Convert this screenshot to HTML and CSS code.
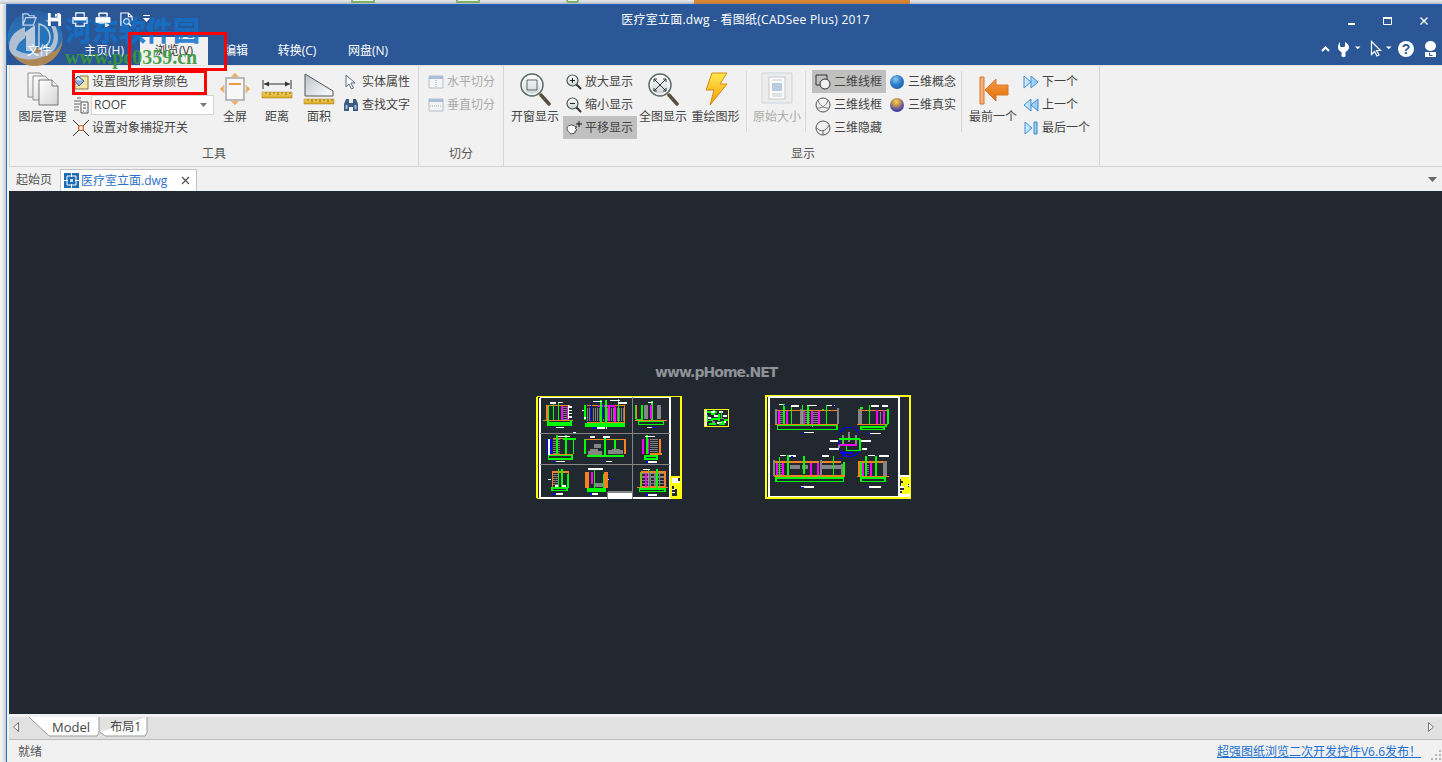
FILE: index.html
```html
<!DOCTYPE html>
<html lang="zh-CN">
<head>
<meta charset="utf-8">
<title>医疗室立面.dwg - 看图纸(CADSee Plus) 2017</title>
<link rel="stylesheet" href="styles.css">
</head>
<body>
<svg class="defs" aria-hidden="true">
  <defs>
    <linearGradient id="glass" x1="0" y1="0" x2="0" y2="1"><stop offset="0" stop-color="#ffffff"/><stop offset="1" stop-color="#c9d3d3"/></linearGradient>
    <linearGradient id="page" x1="0" y1="0" x2="1" y2="1"><stop offset="0" stop-color="#ffffff"/><stop offset="1" stop-color="#d4d4d4"/></linearGradient>
    <linearGradient id="ruler" x1="0" y1="0" x2="0" y2="1"><stop offset="0" stop-color="#f7d968"/><stop offset="1" stop-color="#d8a520"/></linearGradient>
    <linearGradient id="tri" x1="0" y1="0" x2="1" y2="1"><stop offset="0" stop-color="#b9c2cc"/><stop offset="1" stop-color="#ffffff"/></linearGradient>
    <linearGradient id="bolt" x1="0" y1="0" x2="0" y2="1"><stop offset="0" stop-color="#ffe94d"/><stop offset="1" stop-color="#f59a0c"/></linearGradient>
    <linearGradient id="arrow" x1="0" y1="0" x2="0" y2="1"><stop offset="0" stop-color="#f39a48"/><stop offset="1" stop-color="#e56f05"/></linearGradient>
    <linearGradient id="bluetri" x1="0" y1="0" x2="1" y2="0"><stop offset="0" stop-color="#d7ecfb"/><stop offset="1" stop-color="#8cc4ef"/></linearGradient>
    <linearGradient id="logoblue" x1="0" y1="0" x2="0" y2="1"><stop offset="0" stop-color="#2a62a4"/><stop offset="1" stop-color="#2f8fd6"/></linearGradient>
    <radialGradient id="ball1" cx=".4" cy=".3" r=".8"><stop offset="0" stop-color="#8fc6f2"/><stop offset=".5" stop-color="#2f7fcb"/><stop offset="1" stop-color="#175a9f"/></radialGradient>
    <radialGradient id="ball2" cx=".45" cy=".28" r=".75"><stop offset="0" stop-color="#ffd83a"/><stop offset=".4" stop-color="#b98a60"/><stop offset=".8" stop-color="#4a48a8"/><stop offset="1" stop-color="#35358f"/></radialGradient>
    <symbol id="mag-big" viewBox="0 0 32 34">
      <path d="M22 23l8 9" class="i-handle"/>
      <circle cx="13" cy="13" r="11" fill="url(#glass)" stroke="#5f6b6b" stroke-width="1.5"/>
      <circle cx="13" cy="13" r="9.4" fill="none" stroke="#ffffff"/>
    </symbol>
    <symbol id="mag-small" viewBox="0 0 16 16">
      <path d="M10.500 10.500l4 4" class="i-handle-s"/>
      <circle cx="6.500" cy="6.500" r="5.500" fill="url(#glass)" stroke="#4b5555" stroke-width="1.200"/>
    </symbol>
    <symbol id="ball-wire" viewBox="0 0 16 16">
      <circle cx="8" cy="8" r="7" fill="#f1f1f1" stroke="#555" stroke-width="1"/>
      <path d="M3 3.500c2 6 7 8 11 7.500M13 3.500c-2 6-7 8-11 7.500" fill="none" stroke="#777"/>
    </symbol>
  </defs>
</svg>

<div class="desktop-strip">
  <span class="strip-gap"></span>
  <span class="strip-green a"></span>
  <span class="strip-green b"></span>
  <span class="strip-green c"></span>
  <span class="strip-orange"></span>
</div>

<div class="window">
  <header class="titlebar">
    <div class="title-row">
      <div class="qat">
        <svg class="qi" viewBox="0 0 16 16"><path d="M1 14V2h5l2 2h5v2M1 14l3-8h11l-3 8z" fill="none" stroke="#c7d6ea" stroke-width="1.300"/></svg>
        <svg class="qi" viewBox="0 0 16 16"><path d="M1 1h12l2 2v12H1z" fill="#fff"/><path d="M4 1h7v5H4z" fill="#2b5797"/><path d="M8.500 2h2v3h-2z" fill="#fff"/><path d="M4 10h8v5H4z" fill="#2b5797"/></svg>
        <svg class="qi wide" viewBox="0 0 17 16"><path d="M4 5V1h9v4M1 6h15v6H13v3H4v-3H1z" fill="none" stroke="#fff" stroke-width="1.300"/><path d="M2 6h13v3H2z" fill="#fff"/></svg>
        <svg class="qi wide" viewBox="0 0 17 16"><path d="M4 5V1h9v4M1 6h15v5H1z" fill="#fff" stroke="#fff"/><path d="M5 2h7v3H5z" fill="#2b5797"/><path d="M4 12h6M11 12l4 2-4 2z" stroke="#dfe8f4" fill="#dfe8f4"/></svg>
        <svg class="qi last" viewBox="0 0 16 16"><path d="M2 15V1h8l4 4v4M10 1v4h4" fill="none" stroke="#fff" stroke-width="1.200"/><circle cx="8" cy="10" r="3" fill="none" stroke="#cfe0f5" stroke-width="1.200"/><path d="M10 12l3 3" stroke="#fff" stroke-width="1.400"/></svg>
        <svg class="qdrop" viewBox="0 0 7 8"><path d="M0 0h7v1H0zM0 3h7L3.500 7z" fill="#fff"/></svg>
      </div>
      <h1 class="title">医疗室立面.dwg - 看图纸(CADSee Plus) 2017</h1>
      <div class="winctl">
        <span class="wbtn"><svg viewBox="0 0 10 10" class="wi"><path d="M1 7h7v2H1z" fill="#fff"/></svg></span>
        <span class="wbtn"><svg viewBox="0 0 10 10" class="wi"><path d="M.5 1.500h8v7h-8z" fill="none" stroke="#fff"/><path d="M0 1h9v2H0z" fill="#fff"/></svg></span>
        <span class="wbtn"><svg viewBox="0 0 10 10" class="wi"><path d="M1.500 1.500l7 7M8.500 1.500l-7 7" stroke="#fff" stroke-width="1.300"/></svg></span>
      </div>
    </div>
    <nav class="tabs-row">
      <span class="rtab t-file">文件</span>
      <span class="rtab t-home">主页(H)</span>
      <span class="rtab t-view active">浏览(V)</span>
      <span class="rtab t-edit">编辑</span>
      <span class="rtab t-conv">转换(C)</span>
      <span class="rtab t-disk">网盘(N)</span>
      <svg class="tools" viewBox="0 0 124 24">
        <path d="M5 13l3.500-3.500 3.500 3.500" fill="none" stroke="#fff" stroke-width="2"/>
        <path d="M23 4v4c0 .8 1 1 2 1h1c1 0 2-.2 2-1V4c2 1 4 3 4 5 0 3-2 4-3.500 5v4c0 1.500-4 1.500-4 0v-4C22.500 13 21 12 21 9c0-2 1-4 2-5z" fill="#fff"/>
        <path d="M38 8.500h5.500l-2.750 2.800zM69 8.500h5.500l-2.750 2.800z" fill="#fff"/>
        <path d="M54.500 3.500v13l3-3 2.500 4.500 2-1-2.500-4.500h4z" fill="#2b5797" stroke="#fff" stroke-width="1.200"/>
        <circle cx="89" cy="11" r="8" fill="#fff"/>
        <text x="89" y="16" class="help">?</text>
        <ellipse cx="113.500" cy="8" rx="5.500" ry="5" fill="#fff"/>
        <path d="M108 14h11v5h-11z" fill="#fff"/>
        <path d="M112.500 14.500v3h3" fill="none" stroke="#2b5797"/>
      </svg>
    </nav>
  </header>

  <section class="ribbon">
    <div class="group g-tools">
      <div class="group-body">
        <div class="big w55">
          <svg class="big-i" viewBox="0 0 32 34"><path d="M1 1h12l4 4v20H1z" fill="url(#page)" stroke="#8d8d8d"/><path d="M6 4h12l4 4v20H6z" fill="url(#page)" stroke="#8d8d8d"/><path d="M12 8h13l6 6v19H12z" fill="url(#page)" stroke="#777"/><path d="M25 8v6h6" fill="#eee" stroke="#777"/></svg>
          <span>图层管理</span>
        </div>
        <div class="col c-bg">
          <div class="row"><svg class="ico" viewBox="0 0 16 16"><path d="M7 2h8v13H2V9z" fill="#f3e2a6" stroke="#8a7a3a"/><path d="M1 6l4-4 6 5-5 5z" fill="#8fb0d8" stroke="#3a5f90"/><path d="M3 6l2.500-2.500L9 6.500z" fill="#e6f0fa"/></svg><span>设置图形背景颜色</span></div>
          <div class="row combo-row">
            <svg class="ico" viewBox="0 0 16 18"><path d="M1 5h7M1 8h6M1 11h5M1 14h5M4 2h4" stroke="#666" fill="none"/><path d="M8 6h7v11H8z" fill="#fff" stroke="#555"/><path d="M10 9h3M10 12h3M10 15h1M13 15h.5" stroke="#444"/></svg>
            <div class="combo"><span>ROOF</span><svg viewBox="0 0 7 4" class="combo-caret"><path d="M0 0h7L3.500 4z" fill="#777"/></svg></div>
          </div>
          <div class="row"><svg class="ico" viewBox="0 0 16 16"><path d="M0 0l16 16M16 0L0 16" stroke="#333"/><circle cx="8" cy="8" r="2.500" fill="#f1f1f1" stroke="#e0642a" stroke-width="1.200"/></svg><span>设置对象捕捉开关</span></div>
        </div>
        <div class="big w42">
          <svg class="big-i" viewBox="0 0 32 34"><path d="M16 1l4 4h-8zM16 33l4-4h-8zM1 17l4-4v8zM31 17l-4-4v8z" fill="#f2a75a" stroke="#e8c9a0"/><path d="M7 6h18v22H7z" fill="#f7f7f7" stroke="#b9b9b9" stroke-width="2"/><path d="M10 11h12v2H10z" fill="#ee9b45"/></svg>
          <span>全屏</span>
        </div>
        <div class="big w42">
          <svg class="big-i" viewBox="0 0 32 34"><path d="M2 8v9M30 8v9M3 12h26" stroke="#333" fill="none"/><path d="M3 12l5-2.500v5zM29 12l-5-2.500v5z" fill="#333"/><path d="M1 20h30v6H1z" fill="url(#ruler)" stroke="#a57f1a" stroke-width=".5"/><path d="M5 20v2M9 20v3M13 20v2M17 20v3M21 20v2M25 20v3M29 20v2" stroke="#8a6a12"/></svg>
          <span>距离</span>
        </div>
        <div class="big w42">
          <svg class="big-i" viewBox="0 0 32 34"><path d="M2 2l28 17v5H2z" fill="url(#tri)" stroke="#555"/><path d="M1 27h30v5H1z" fill="url(#ruler)" stroke="#a57f1a" stroke-width=".5"/><path d="M5 27v2M9 27v3M13 27v2M17 27v3M21 27v2M25 27v3M29 27v2" stroke="#8a6a12"/></svg>
          <span>面积</span>
        </div>
        <div class="col">
          <div class="row"><svg class="ico" viewBox="0 0 16 16"><path d="M3 1v12l3-3 2.500 5 2-1L8 9h4z" fill="#fff" stroke="#5a6a80"/></svg><span>实体属性</span></div>
          <div class="row"><svg class="ico" viewBox="0 0 16 16"><path d="M1 14V7l2-5h3v12zM10 14V2h3l2 5v7zM6 6h4v4H6z" fill="#3b5b80"/><path d="M2.500 8h2v4h-2zM11.500 8h2v4h-2z" fill="#9fc0e0"/></svg><span>查找文字</span></div>
        </div>
      </div>
      <div class="group-label">工具</div>
    </div>

    <div class="group g-split">
      <div class="group-body">
        <div class="col off">
          <div class="row"><svg class="ico" viewBox="0 0 16 16"><path d="M1 2h14v12H1z" fill="#f4f4f4" stroke="#b5c0cc"/><path d="M1 2h14v3H1z" fill="#a9bfd8"/><path d="M8 6v8" stroke="#9aa" stroke-dasharray="1 1"/></svg><span>水平切分</span></div>
          <div class="row"><svg class="ico" viewBox="0 0 16 16"><path d="M1 2h14v12H1z" fill="#f4f4f4" stroke="#b5c0cc"/><path d="M1 2h14v3H1z" fill="#a9bfd8"/><path d="M2 9h12" stroke="#9aa" stroke-dasharray="1 1"/></svg><span>垂直切分</span></div>
        </div>
      </div>
      <div class="group-label">切分</div>
    </div>

    <div class="group g-show">
      <div class="group-body">
        <div class="big w56">
          <svg class="big-i" viewBox="0 0 32 34"><use href="#mag-big"/><path d="M8 8h10v10H8z" fill="none" stroke="#666"/></svg>
          <span>开窗显示</span>
        </div>
        <div class="col">
          <div class="row"><svg class="ico" viewBox="0 0 16 16"><use href="#mag-small"/><path d="M4 6.500h5M6.500 4v5" stroke="#222"/></svg><span>放大显示</span></div>
          <div class="row"><svg class="ico" viewBox="0 0 16 16"><use href="#mag-small"/><path d="M4 6.500h5" stroke="#222"/></svg><span>缩小显示</span></div>
          <div class="row sel"><svg class="ico" viewBox="0 0 16 16"><path d="M1 8c0-2 3-3 5-3l5 2-2 1 2 2-2 1v2l-4 1c-2-1-4-4-4-6z" fill="#fff" stroke="#444" stroke-width=".9"/><path d="M13 1v6M10 4h6" stroke="#111"/></svg><span>平移显示</span></div>
        </div>
        <div class="big w52">
          <svg class="big-i" viewBox="0 0 32 34"><use href="#mag-big"/><path d="M7 7l12 12M19 7L7 19M7 7h3M7 7v3M19 7h-3M19 7v3M7 19h3M7 19v-3M19 19h-3M19 19v-3" stroke="#333" fill="none"/></svg>
          <span>全图显示</span>
        </div>
        <div class="big w53">
          <svg class="big-i" viewBox="0 0 32 34"><path d="M12 1h15l-7 11h7L10 33l4-15H6z" fill="url(#bolt)" stroke="#d98a10"/></svg>
          <span>重绘图形</span>
        </div>
        <i class="sep s-a"></i>
        <div class="big w52 off">
          <svg class="big-i" viewBox="0 0 32 34"><path d="M1 1h30v30H1z" fill="#ececec" stroke="#cfd6dd"/><path d="M8 5h16v22H8z" fill="#fbfbfb" stroke="#c9c9c9"/><path d="M11 11h10v8H11z" fill="#b9cbe0"/><path d="M11 8h10M11 22h10M11 24h10" stroke="#c9c9c9"/></svg>
          <span>原始大小</span>
        </div>
        <i class="sep s-b"></i>
        <div class="col">
          <div class="row sel"><svg class="ico" viewBox="0 0 16 16"><path d="M1 1h11v10H1z" fill="none" stroke="#333"/><circle cx="10" cy="10" r="5" fill="#f1f1f1" stroke="#333"/></svg><span>二维线框</span></div>
          <div class="row"><svg class="ico" viewBox="0 0 16 16"><use href="#ball-wire"/></svg><span>三维线框</span></div>
          <div class="row"><svg class="ico" viewBox="0 0 16 16"><circle cx="8" cy="8" r="7" fill="#f1f1f1" stroke="#555"/><path d="M2 8c3 4 9 4 12-3M8 11v4" fill="none" stroke="#666"/></svg><span>三维隐藏</span></div>
        </div>
        <div class="col">
          <div class="row"><svg class="ico" viewBox="0 0 16 16"><circle cx="8" cy="8" r="7" fill="url(#ball1)"/></svg><span>三维概念</span></div>
          <div class="row"><svg class="ico" viewBox="0 0 16 16"><circle cx="8" cy="8" r="7" fill="url(#ball2)"/></svg><span>三维真实</span></div>
        </div>
        <i class="sep s-c"></i>
        <div class="big w52">
          <svg class="big-i" viewBox="0 0 32 34"><path d="M3 5h4v27H3z" fill="#f3b07a" stroke="#d9792d"/><path d="M8 18L19 7v6h12v10H19v6z" fill="url(#arrow)" stroke="#d9792d"/></svg>
          <span>最前一个</span>
        </div>
        <div class="col c-nav">
          <div class="row"><svg class="ico" viewBox="0 0 16 16"><path d="M1 2l7 6-7 6zM8 2l7 6-7 6z" fill="url(#bluetri)" stroke="#3f8fd6"/></svg><span>下一个</span></div>
          <div class="row"><svg class="ico" viewBox="0 0 16 16"><path d="M8 2L1 8l7 6zM15 2L8 8l7 6z" fill="url(#bluetri)" stroke="#3f8fd6"/></svg><span>上一个</span></div>
          <div class="row"><svg class="ico" viewBox="0 0 16 16"><path d="M2 2l7 6-7 6zM11 2h3v12h-3z" fill="url(#bluetri)" stroke="#3f8fd6"/></svg><span>最后一个</span></div>
        </div>
      </div>
      <div class="group-label">显示</div>
    </div>
  </section>

  <div class="doc-tabs">
    <span class="home-tab">起始页</span>
    <div class="doc-tab">
      <svg class="doc-ico" viewBox="0 0 15 15"><path d="M0 0h15v15H0z" fill="#1c6db5"/><path d="M3 3h9v9H3z" fill="none" stroke="#fff"/><path d="M6 6h3v3H6z" fill="#bfe0f5"/><path d="M7.500 0v4M7.500 11v4M0 7.500h4M11 7.500h4" stroke="#fff"/></svg>
      <span class="doc-name">医疗室立面.dwg</span>
      <svg class="doc-close" viewBox="0 0 9 9"><path d="M1 1l7 7M8 1L1 8" stroke="#555" stroke-width="1.300"/></svg>
    </div>
    <svg class="doc-more" viewBox="0 0 9 5"><path d="M0 0h9L4.500 5z" fill="#666"/></svg>
  </div>

  <main class="canvas">
    <div class="canvas-mark">www.pHome.NET</div>

    <svg class="sheet s1" viewBox="0 0 450 330">
      <path class="y" d="M7 14H438V319H7z"/>
      <path class="y thick" d="M7 14V319"/>
      <path class="w thick" d="M14 17V318"/>
      <path class="w" d="M14 318H405M14 17H405M405 15V320"/>
      <path class="k" d="M15 124H405M15 217H405M292 15V320"/>
      <!-- row 1 -->
      <path class="o thick2" d="M36 40V85"/><path class="o" d="M40 40H105M25 85H113"/>
      <path class="hatch h14" d="M89 45V85"/><path class="m" d="M80 42V85M98 42V85"/>
      <path class="g" d="M38 85V98H108V85M40 40V85M55 35V85M70 30V85M40 92H105"/>
      <path class="w" d="M45 33H62M70 32H85M102 45H112M102 55H112M102 65H112M102 75H112M100 38V80"/>
      <path class="w" d="M62 107H88"/><path class="b" d="M54 107H60"/>
      <path class="hatch h30" d="M155 68H268"/><path class="hatch h20" d="M155 68H268"/>
      <path class="o" d="M155 40H270M155 92H270M268 40V92"/>
      <path class="m thick2" d="M198 42V88M222 42V88M240 44V90"/><path class="m" d="M190 42H240"/>
      <path class="g" d="M153 95H268V102H153zM150 40V85M197 25V95M213 25V95M250 20V95"/>
      <path class="b" d="M170 35V90M205 35V80M185 30H190"/>
      <path class="w" d="M175 28H200M225 25H255M250 33H275M215 104V112M185 108H210M140 55H146M148 78H153"/><path class="b" d="M175 108H183"/>
      <path class="k thick3" d="M332 40V82M372 40V82"/>
      <path class="g" d="M302 40V82M310 88H385V97H310zM320 40V85M350 28V85M302 82H318"/><path class="o" d="M300 85H395M304 40V82"/><path class="m" d="M347 40V82"/>
      <path class="w" d="M340 32H355M335 107H350"/><path class="b" d="M350 107H365"/>
      <!-- row 2 -->
      <path class="w" d="M42 140V190"/><path class="b" d="M37 140V190M48 140V190"/>
      <path class="hatch h14" d="M67 142V187"/><path class="hatch h14" d="M62 142V187"/>
      <path class="o" d="M55 140H115M45 187H115"/>
      <path class="g" d="M40 190H110V200H40zM65 130V187M92 130V187M115 142V187M85 140H122"/>
      <path class="w" d="M70 133H105M115 122H122"/><path class="w" d="M60 208H90"/><path class="b" d="M55 208H62"/>
      <path class="o" d="M153 142H270"/><path class="o thick2" d="M271 142V187"/><path class="g" d="M150 142V187M155 192H268M210 135V190M240 142V178"/>
      <path class="k thick3" d="M178 162H198M160 182H200M218 180H265"/><path class="k thick2" d="M165 175H190M232 174H255"/>
      <path class="w" d="M165 135H180M205 135H225M212 208H232"/><path class="b" d="M202 208H208"/>
      <path class="hatch h20" d="M357 140V187"/>
      <path class="m thick2" d="M325 140V187M340 140V187"/><path class="o" d="M375 140V187M345 186H380"/><path class="g" d="M330 192H365V200H330zM335 130V186"/>
      <path class="w" d="M330 133H360M340 210H365"/><path class="b" d="M332 210H340"/>
      <!-- row 3 -->
      <path class="o" d="M52 240H100V287H52z"/><path class="hatch h14" d="M62 245V278"/><path class="m" d="M80 243V280"/><path class="g" d="M50 287H95V295H50zM70 230V287M80 232V287M98 245V287"/>
      <path class="w thick2" d="M60 282H70M80 282H92"/><path class="w" d="M62 306H85M40 262H48"/><path class="b" d="M55 306H62"/>
      <path class="o thick3" d="M157 240V287M212 240V287"/><path class="m thick2" d="M170 240V275"/><path class="k thick3" d="M180 280H205"/><path class="g" d="M158 290H210V296H158zM205 245V287M178 228V287"/>
      <path class="w thick2" d="M160 232H205"/><path class="w" d="M165 306H190M218 262H232"/><path class="b" d="M222 262H232M165 306H172"/>
      <path class="w thick3" d="M220 310H290"/><path class="k" d="M218 300H292M218 300V320"/>
      <path class="k" d="M320 245H390M320 255H390M320 265H390M320 275H390M347 240V285M360 240V285M373 240V285"/>
      <path class="o" d="M320 240H390V285H320zM305 287H400M335 240V285"/><path class="m thick2" d="M332 243V285M342 243V285"/><path class="g" d="M313 290H390V298H313zM316 240V290M340 230V290M365 230V288"/>
      <path class="w" d="M325 233H345M340 309H365"/><path class="b" d="M333 309H340"/>
      <!-- title block -->
      <path class="y thick2" d="M407 254H437V315H407z"/>
      <path class="w thick3" d="M410 265H430"/><path class="y thick3" d="M412 276H436M418 286H436M425 297H436M425 308H436"/><path class="w" d="M410 270H436M412 292H420M412 302H420"/>
    </svg>

    <svg class="sheet mid" viewBox="0 0 75 54">
      <path class="y thick" d="M2 2H73V52H2z"/>
      <path class="w thick2" d="M6 4V50"/>
      <path class="g thick2" d="M10 8H40M10 18V40M22 30H48M44 14V36M56 20H70M14 44H36M30 4V18M20 14H34M50 38H62"/>
      <path class="w thick3" d="M22 10H32M46 8H58M58 22H68M12 26H20M30 22H42M38 42H54M60 40H66"/>
      <path class="k thick2" d="M48 28H60M24 38H34"/>
      <path class="g thick2" d="M8 34H28M52 10V30M60 32H72M44 44H64"/>
    </svg>

    <svg class="sheet s2" viewBox="0 0 450 330">
      <path class="y thick" d="M7 12H438V317H7z"/>
      <path class="w thick" d="M14 15V314"/>
      <path class="w" d="M14 314H405M14 15H405M405 12V315"/>
      <!-- top left -->
      <path class="o" d="M33 55H222M33 97H222"/><path class="k thick2" d="M35 50V97M110 50V97M222 48V97"/>
      <path class="hatch h14" d="M56 60V94"/><path class="m thick2" d="M45 58V95M70 58V95"/>
      <path class="hatch h14" d="M155 60V94M130 60V94"/><path class="m thick2" d="M120 58V95M145 58V95M165 58V95"/>
      <path class="g" d="M40 100H218V112H40zM60 35V95M82 42V100M115 40V98M132 42V95M187 40V95M175 52H180M145 97V106"/>
      <path class="w" d="M45 38H58M80 42H105M128 40H160M190 40H212M120 122H150"/><path class="b" d="M112 124H120M60 40H65M205 40H210"/>
      <!-- top right -->
      <path class="k thick3" d="M288 52V97"/><path class="o" d="M285 55H370M278 97H372"/>
      <path class="m thick2" d="M338 55V95M360 55V95"/><path class="k" d="M350 60V95"/>
      <path class="g" d="M290 105H360V112H290zM372 52V96M365 96V104M316 38V96"/><path class="g thick2" d="M288 47H298M338 105H362"/>
      <path class="w" d="M320 42H345M355 42H372M318 124H350"/><path class="b" d="M310 124H318"/>
      <!-- centre detail -->
      <path class="b" d="M225 130A32 32 0 0 1 287 130M225 148A32 32 0 0 0 290 170M240 178L235 195M235 183H268"/>
      <path class="k thick2" d="M238 128V160M255 120V150M275 128V162M240 158H275"/><path class="g" d="M225 140H287M247 162V175H287V142M238 142V160"/>
      <path class="m" d="M225 158H280"/><path class="w thick2" d="M198 148H222M195 170H225M290 146H320M295 170H310"/><path class="k thick2" d="M225 160V168"/>
      <!-- lower left -->
      <path class="o" d="M30 210H165M30 252H242M172 210H232"/>
      <path class="k thick2" d="M31 205V252M170 205V252"/><path class="k thick3" d="M78 224H108M115 224H132M175 224H235"/>
      <path class="m thick2" d="M38 212V250M58 212V250M142 212V250M162 212V250"/><path class="hatch h14" d="M48 215V250"/>
      <path class="g" d="M35 258H238V268H35zM46 195V252M72 190V252M120 192V245M208 192V252M115 250V260"/>
      <path class="g thick2" d="M240 210V250M165 252V260"/><path class="k thick2" d="M235 215V250"/>
      <path class="w" d="M48 190H65M75 192H95M175 192H195M112 285H150"/><path class="b" d="M80 195H88M225 200H235M112 287H120"/>
      <!-- lower right -->
      <path class="o thick3" d="M287 208V252"/><path class="o" d="M285 210H365M280 254H375"/><path class="k thick3" d="M362 206V252"/>
      <path class="m thick2" d="M298 212V252M320 212V252"/><path class="hatch h14" d="M309 218V250"/>
      <path class="g" d="M290 258H362V268H290zM306 192V252M335 192V252M290 210V258"/>
      <path class="w" d="M312 190H332M345 192H375M315 285H350"/><path class="b" d="M308 287H316"/>
      <!-- title block -->
      <path class="w thick3" d="M406 255H437M406 310H437"/><path class="y thick3" d="M412 260H436M416 270H436M410 280H432M420 290H438M414 300H434"/><path class="w" d="M406 285H420M408 295H418M425 280H437"/>
    </svg>
  </main>

  <div class="sheet-tabs">
    <svg class="arrow-l" viewBox="0 0 6 10"><path d="M5.500 .5v9L.5 5z" fill="#f1f1f1" stroke="#777"/></svg>
    <div class="stab s-model">
      <svg class="stab-bg" viewBox="0 0 72 20" preserveAspectRatio="none"><path d="M1 0l20 19h48l2-3V0" fill="#fff" stroke="#999"/></svg>
      <span>Model</span>
    </div>
    <div class="stab s-layout">
      <svg class="stab-bg" viewBox="0 0 49 20" preserveAspectRatio="none"><path d="M1 15l5 4h40l2-3V0" fill="#fff" stroke="#999"/></svg>
      <span>布局1</span>
    </div>
    <svg class="arrow-r" viewBox="0 0 6 10"><path d="M.5 .5v9L5.500 5z" fill="#f1f1f1" stroke="#777"/></svg>
  </div>

  <footer class="status">
    <span>就绪</span>
    <a class="status-link">超强图纸浏览二次开发控件V6.6发布！</a>
    <svg class="grip" viewBox="0 0 12 12"><path d="M9 1h2v2H9zM5 5h2v2H5zM9 5h2v2H9zM1 9h2v2H1zM5 9h2v2H5zM9 9h2v2H9z" fill="#b9b9b9"/></svg>
  </footer>
</div>

<!-- overlays: site watermark and annotation boxes on top of the screenshot -->
<svg class="wm-logo" viewBox="0 0 56 56">
  <circle cx="28" cy="28" r="27.500" fill="url(#logoblue)"/>
  <path d="M4 42A27.500 27.500 0 0 0 55.500 28C54 38 46 46 32 48 22 49 12 47 4 42z" fill="#b98a4e"/>
  <path d="M28 36c4 4 16 10 26 2-5 10-14 17-26 17z" fill="#b98a4e"/>
  <path d="M2 36C3 25 10 20 18 17v11c-5 3-8 7-9 12 8 5 22 5 32-1 7-5 8-17 1-26l-4-3 6 1c8 6 10 22 2 30-10 9-28 11-38 5-4-2-6-5-6-10z" fill="#bcc9d8"/>
  <path d="M17 23l11-8v26h-9V27z" fill="#c6d2e0"/>
  <path d="M32 14c8 2 11 8 11 14 0 6-4 9-11 11z" fill="#2577bd" stroke="#c5d2e0" stroke-width="1.500"/>
</svg>
<div class="wm-cn">河东软件园</div>
<div class="wm-url">www.pc0359.cn</div>
<i class="mark mark-tab"></i>
<i class="mark mark-cmd"></i>
</body>
</html>
```
FILE: styles.css
```css
* { box-sizing: border-box; }
html, body { margin: 0; height: 762px; overflow: hidden; }
body {
  position: relative;
  display: flex;
  flex-direction: column;
  width: 1442px;
  background: linear-gradient(90deg, #f2f2f2, #ececec 70%, #cfcfcf);
  font: 12px/16px "Open Sans", "Noto Sans CJK SC", sans-serif;
  color: #444;
}
.defs { position: absolute; width: 0; height: 0; }

/* strip of the desktop visible above the window */
.desktop-strip {
  display: flex;
  height: 4px;
  flex: none;
  overflow: hidden;
  background: linear-gradient(#e6e9ee, #c4c8ce);
}
.strip-gap { width: 351px; }
.strip-green { height: 3px; border: 2px solid #7fb56a; border-top: 0; background: #eef0f2; }
.strip-green.a { width: 24px; }
.strip-green.b { width: 24px; margin-left: 81px; }
.strip-green.c { width: 13px; margin-left: 86px; border-radius: 0 0 6px 6px; }
.strip-orange { width: 216px; margin-left: 115px; background: #d98536; }

.window {
  flex: 1;
  min-height: 0;
  margin-left: 6px;
  display: flex;
  flex-direction: column;
  border-left: 1px solid #1f70cf;
  box-shadow: -2px 0 3px rgba(0, 0, 0, .18);
  background: #f1f1f1;
}

/* title bar */
.titlebar { flex: none; height: 61px; background: #2b5797; border-top: 1px solid #1a62c0; color: #fff; }
.title-row { display: flex; height: 32px; align-items: center; }
.qat { position: relative; z-index: 2; display: flex; align-items: center; width: 179px; padding: 0 0 4px 15px; }
.qi { width: 15px; height: 15px; margin-right: 10px; }
.qi.wide { width: 16px; margin-right: 7px; }
.qi.last { margin-left: 1px; margin-right: 9px; }
.qdrop { width: 7px; height: 8px; }
.title { flex: 1; margin: 0 0 2px; padding-right: 29px; font: inherit; text-align: center; font-size: 12px; letter-spacing: .25px; }
.winctl { display: flex; width: 108px; }
.wbtn { display: flex; width: 36px; height: 32px; align-items: center; justify-content: center; }
.wi { width: 10px; height: 10px; }

.tabs-row { display: flex; height: 28px; padding-left: 3px; position: relative; }
.rtab { display: flex; justify-content: center; align-items: center; }
.rtab.active { background: #f1f1f1; color: #333; }
.t-file { position: relative; z-index: 2; width: 58px; }
.t-home { width: 72px; }
.t-view { width: 68px; }
.t-edit { width: 56px; }
.t-conv { width: 66px; }
.t-disk { width: 76px; }
.tools { width: 124px; height: 24px; margin: 1px 1px 0 auto; }
.help { font: bold 14px "Liberation Sans", sans-serif; fill: #2b5797; text-anchor: middle; }

/* ribbon */
.ribbon { flex: none; display: flex; height: 102px; margin-left: 2px; border-top: 1px solid #e4e4e4; border-bottom: 1px solid #d2d2d2; border-left: 1px solid #dcdcdc; }
.group { display: flex; flex-direction: column; border-right: 1px solid #d5d5d5; }
.g-tools { width: 409px; padding-left: 5px; }
.g-split { width: 85px; padding-left: 6px; }
.g-show { width: 596px; padding-left: 3px; }
.group-body { flex: none; display: flex; height: 73px; padding-top: 4px; }
.group-label { text-align: center; color: #555; padding-top: 7px; }
.g-tools .group-label { padding-right: 5px; }
.g-split .group-label { padding-right: 6px; }

.big { display: flex; flex-direction: column; align-items: center; flex: none; }
.big-i { width: 32px; height: 34px; margin: 2px 0 3px; }
.big span { display: block; line-height: 16px; }
.w42 { width: 42px; }
.w52 { width: 52px; }
.w53 { width: 53px; }
.w55 { width: 55px; }
.w56 { width: 56px; }
.col { display: flex; flex-direction: column; flex: none; }
.c-bg { width: 144px; }
.c-nav { margin-left: 1px; }
.row { display: flex; align-items: center; gap: 3px; height: 23px; padding: 0 4px 0 3px; }
.ico { flex: none; width: 16px; height: 16px; }
.sel { background: #c0c0c0; }
.off { color: #aaa; }
.sep { flex: none; width: 1px; height: 61px; margin-top: 1px; background: #d8d8d8; }
.s-a { margin: 1px 4px 0 4px; }
.s-b { margin: 1px 6px 0 2px; }
.s-c { margin: 1px 5px 0 1px; }
.combo-row { padding-right: 0; gap: 2px; }
.combo-row .ico { height: 18px; }
.combo { flex: 1; display: flex; align-items: center; justify-content: space-between; height: 20px; padding: 0 6px 0 2px; background: #fff; border: 1px solid #d5d5d5; }
.combo-caret { width: 7px; height: 4px; }
.i-handle { stroke: #5a5040; stroke-width: 3.500; stroke-linecap: round; fill: none; }
.i-handle-s { stroke: #333; stroke-width: 2; stroke-linecap: round; fill: none; }

/* document tabs */
.doc-tabs { flex: none; display: flex; height: 25px; align-items: flex-end; padding-left: 9px; margin-top: -1px; }
.home-tab { width: 44px; height: 21px; line-height: 20px; color: #555; }
.doc-tab { display: flex; align-items: center; width: 137px; height: 22px; padding: 0 5px 0 3px; background: #fff; border: 1px solid #c4c4c4; border-bottom: 0; }
.doc-ico { width: 15px; height: 15px; }
.doc-name { margin-left: 2px; flex: 1; color: #2d6fc6; }
.doc-close { width: 9px; height: 9px; margin-right: 1px; }
.doc-more { width: 9px; height: 5px; margin: 0 5px 9px auto; }

/* drawing canvas: items are placed freely on it */
.canvas { position: relative; flex: 1; margin-left: 2px; background: #212830; min-height: 0; }
.canvas-mark { position: absolute; left: 646px; top: 172px; font: bold 14px/18px "DejaVu Sans", sans-serif; letter-spacing: -.95px; color: #8f9398; }
.sheet { position: absolute; shape-rendering: crispEdges; }
.s1 { left: 526px; top: 201px; width: 150px; height: 110px; }
.s2 { left: 755px; top: 201px; width: 150px; height: 110px; }
.mid { left: 695px; top: 218px; width: 25px; height: 18px; }
.sheet path { fill: none; stroke-width: 3.500; }
.sheet .g { stroke-width: 5; }
.sheet .m { stroke-width: 5; }
.y { stroke: #ffff00; }
.w { stroke: #ffffff; }
.g { stroke: #00ff00; }
.o { stroke: #f58220; }
.m { stroke: #ff00ff; }
.b { stroke: #0000ff; }
.k { stroke: #858585; }
.sheet .thick { stroke-width: 6; }
.sheet .thick2 { stroke-width: 6; }
.sheet .thick3 { stroke-width: 12; }
.sheet .hatch { stroke: #7d7d7d; stroke-dasharray: 3 3; }
.sheet .h14 { stroke-width: 14; }
.sheet .h20 { stroke-width: 22; }
.sheet .h30 { stroke-width: 40; }
.mid path { stroke-width: 3; }
.mid .thick { stroke-width: 4; }
.mid .thick2 { stroke-width: 5; }
.mid .thick3 { stroke-width: 6; }

/* sheet tabs */
.sheet-tabs { flex: none; display: flex; height: 26px; margin-left: 2px; align-items: flex-start; background: linear-gradient(#f1f1f1 3px, #e1e1e1 3px); border-bottom: 1px solid #bdbdbd; position: relative; }
.arrow-l { width: 6px; height: 10px; margin: 8px 0 0 4px; }
.arrow-r { width: 6px; height: 10px; margin: 8px 8px 0 auto; }
.stab { position: relative; height: 20px; margin-top: 3px; display: flex; align-items: center; justify-content: flex-end; }
.stab-bg { position: absolute; left: 0; top: 0; width: 100%; height: 100%; }
.stab span { position: relative; line-height: 18px; color: #444; }
.s-model { width: 72px; margin-left: 9px; padding-right: 10px; font-size: 13px; }
.s-layout { width: 49px; margin-left: -1px; padding-right: 7px; }

/* status bar */
.status { flex: none; height: 22px; display: flex; align-items: center; padding: 1px 0 0 11px; background: #f1f1f1; color: #555; }
.status-link { margin-left: auto; color: #1a6fd0; text-decoration: underline; }
.grip { width: 12px; height: 12px; margin: 6px 0 0 9px; }

/* overlays */
.wm-logo { position: absolute; left: 7px; top: 10px; width: 56px; height: 56px; opacity: .92; }
.wm-cn { position: absolute; left: 65px; top: 12px; font: 900 27px/36px "Noto Sans CJK SC", sans-serif; color: #1470c8; opacity: .85; white-space: nowrap; }
.wm-url { position: absolute; left: 65px; top: 46px; font: bold 20px/22px "Liberation Serif", serif; color: #39983a; opacity: .9; white-space: nowrap; }
.mark { position: absolute; border: 3px solid #f00; }
.mark-tab { left: 128px; top: 32px; width: 99px; height: 39px; }
.mark-cmd { left: 72px; top: 70px; width: 135px; height: 25px; }
```
